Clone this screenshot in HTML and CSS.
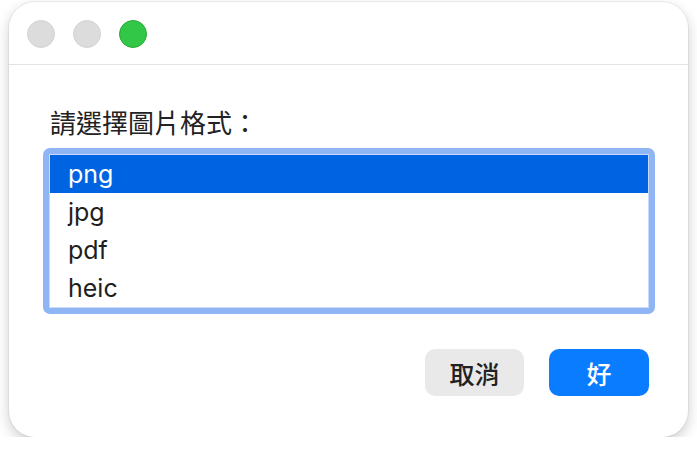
FILE: index.html
```html
<!DOCTYPE html>
<html lang="zh-Hant">
<head>
<meta charset="utf-8">
<title>選擇圖片格式</title>
<link rel="stylesheet" href="styles.css">
</head>
<body>
<div class="window">
  <div class="titlebar">
    <span class="light gray"></span>
    <span class="light gray"></span>
    <span class="light green"></span>
  </div>
  <div class="content">
    <div class="label">請選擇圖片格式：</div>
    <div class="ring">
      <ul class="list">
        <li class="row selected">png</li>
        <li class="row">jpg</li>
        <li class="row">pdf</li>
        <li class="row">heic</li>
      </ul>
    </div>
    <div class="buttons">
      <button class="btn cancel">取消</button>
      <button class="btn ok">好</button>
    </div>
  </div>
</div>
</body>
</html>
```

FILE: styles.css
```css
html, body {
  margin: 0;
  background: #ffffff;
}
body {
  padding: 2px 0 0 9px;
  font-family: "Inter", "Noto Sans CJK TC", sans-serif;
  color: #1e1e1e;
}
.window {
  width: 679px;
  height: 435px;
  box-sizing: border-box;
  background: #ffffff;
  border-radius: 26px;
  box-shadow: 0 0 0 1px rgba(0,0,0,0.05), 0 5px 14px rgba(0,0,0,0.2);
  overflow: hidden;
}
.titlebar {
  border-bottom: 1px solid #e3e3e3;
  display: flex;
  align-items: flex-start;
  gap: 18px;
  padding: 18px 0 0 18px;
  box-sizing: border-box;
  height: 63px;
}
.light {
  width: 28px;
  height: 28px;
  border-radius: 50%;
  box-sizing: border-box;
}
.light.gray {
  background: #dcdcdc;
  border: 1px solid #d2d2d2;
}
.light.green {
  background: #33c748;
  border: 1px solid #27aa36;
}
.content {
  padding: 44px 39px 0 34px;
}
.label {
  font-size: 26px;
  line-height: 30px;
  padding-left: 7px;
  margin-bottom: 9px;
  color: #222222;
}
.ring {
  background: #90b5f5;
  padding: 6px;
  border-radius: 7px;
  width: 612px;
  box-sizing: border-box;
}
.list {
  list-style: none;
  margin: 0;
  padding: 0;
  background: #ffffff;
  border: 1px solid #c9dafa;
}
.row {
  height: 38px;
  line-height: 38px;
  font-size: 25px;
  padding-left: 18px;
  color: #1e1e1e;
}
.row.selected {
  background: #0063e1;
  color: #ffffff;
}
.buttons {
  display: flex;
  justify-content: flex-end;
  gap: 25px;
  margin-top: 35px;
}
.btn {
  height: 47px;
  border: none;
  border-radius: 10px;
  font-family: "Noto Sans CJK TC", sans-serif;
  font-size: 25px;
  font-weight: 500;
  padding: 0;
}
.cancel {
  width: 99px;
  background: #e9e9e9;
  color: #222222;
}
.ok {
  width: 100px;
  background: #0a7cff;
  color: #ffffff;
}
```
